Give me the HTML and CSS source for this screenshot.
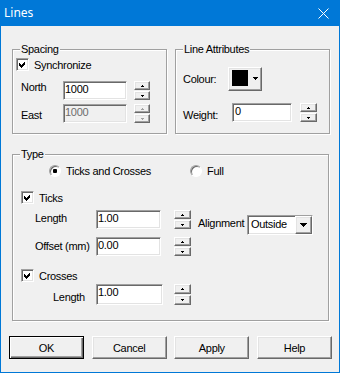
FILE: index.html
```html
<!DOCTYPE html>
<html lang="en">
<head>
  <meta charset="UTF-8">
  <meta name="viewport" content="width=device-width, initial-scale=1.0">
  <title>Lines</title>
  <link rel="stylesheet" href="styles.css">
</head>
<body>
  <div class="window">
    <header class="titlebar">
      <span class="title">Lines</span>
      <svg class="close" width="11" height="11" viewBox="0 0 11 11"><path d="M0.5 0.5L10.5 10.5M10.5 0.5L0.5 10.5" stroke="#fff" stroke-width="1"/></svg>
    </header>

    <main class="client">
      <div class="top-row">
        <section class="group spacing">
          <span class="group-label">Spacing</span>
          <div class="check sync">
            <span class="box sunken"><svg width="13" height="13" viewBox="0 0 13 13"><polygon points="3,5 5,7 9,3 9,6 5,10 3,8" shape-rendering="crispEdges"/></svg></span>
            <span>Synchronize</span>
          </div>
          <div class="spacing-grid">
            <span class="lbl">North</span>
            <div class="edit sunken">1000</div>
            <div class="spin">
              <span class="spin-btn raised"><svg width="3" height="2"><path d="M1 0h1v1h1v1H0V1h1z"/></svg></span>
              <span class="spin-btn raised"><svg width="3" height="2"><path d="M0 0h3v1H2v1H1V1H0z"/></svg></span>
            </div>
            <span class="lbl east">East</span>
            <div class="edit sunken disabled">1000</div>
            <div class="spin disabled">
              <span class="spin-btn raised"><svg width="3" height="2"><path d="M1 0h1v1h1v1H0V1h1z"/></svg></span>
              <span class="spin-btn raised"><svg width="3" height="2"><path d="M0 0h3v1H2v1H1V1H0z"/></svg></span>
            </div>
          </div>
        </section>

        <section class="group attrs">
          <span class="group-label">Line Attributes</span>
          <div class="colour-row">
            <span class="lbl">Colour:</span>
            <div class="colour-btn raised">
              <span class="swatch"></span>
              <svg width="5" height="3"><path d="M0 0h5v1H4v1H3v1H2V2H1V1H0z"/></svg>
            </div>
          </div>
          <div class="weight-row">
            <span class="lbl">Weight:</span>
            <div class="edit sunken weight">0</div>
            <div class="spin">
              <span class="spin-btn raised"><svg width="3" height="2"><path d="M1 0h1v1h1v1H0V1h1z"/></svg></span>
              <span class="spin-btn raised"><svg width="3" height="2"><path d="M0 0h3v1H2v1H1V1H0z"/></svg></span>
            </div>
          </div>
        </section>
      </div>

      <section class="group type">
        <span class="group-label">Type</span>
        <div class="radio-row">
          <div class="radio-item first"><span class="radio checked"></span><span>Ticks and Crosses</span></div>
          <div class="radio-item"><span class="radio"></span><span>Full</span></div>
        </div>

        <div class="check ticks">
          <span class="box sunken"><svg width="13" height="13" viewBox="0 0 13 13"><polygon points="3,5 5,7 9,3 9,6 5,10 3,8" shape-rendering="crispEdges"/></svg></span>
          <span>Ticks</span>
        </div>
        <div class="ticks-grid">
          <span class="lbl len">Length</span>
          <div class="edit sunken">1.00</div>
          <div class="spin">
            <span class="spin-btn raised"><svg width="3" height="2"><path d="M1 0h1v1h1v1H0V1h1z"/></svg></span>
            <span class="spin-btn raised"><svg width="3" height="2"><path d="M0 0h3v1H2v1H1V1H0z"/></svg></span>
          </div>
          <span class="lbl align-lbl">Alignment</span>
          <div class="combo sunken">
            <span class="combo-text">Outside</span>
            <span class="combo-btn raised"><svg width="7" height="4"><path d="M0 0h7v1H6v1H5v1H4v1H3V3H2V2H1V1H0z"/></svg></span>
          </div>
          <span class="lbl off">Offset (mm)</span>
          <div class="edit sunken">0.00</div>
          <div class="spin">
            <span class="spin-btn raised"><svg width="3" height="2"><path d="M1 0h1v1h1v1H0V1h1z"/></svg></span>
            <span class="spin-btn raised"><svg width="3" height="2"><path d="M0 0h3v1H2v1H1V1H0z"/></svg></span>
          </div>
        </div>

        <div class="check crosses">
          <span class="box sunken"><svg width="13" height="13" viewBox="0 0 13 13"><polygon points="3,5 5,7 9,3 9,6 5,10 3,8" shape-rendering="crispEdges"/></svg></span>
          <span>Crosses</span>
        </div>
        <div class="crosses-grid">
          <span class="lbl">Length</span>
          <div class="edit sunken">1.00</div>
          <div class="spin">
            <span class="spin-btn raised"><svg width="3" height="2"><path d="M1 0h1v1h1v1H0V1h1z"/></svg></span>
            <span class="spin-btn raised"><svg width="3" height="2"><path d="M0 0h3v1H2v1H1V1H0z"/></svg></span>
          </div>
        </div>
      </section>

      <div class="buttons">
        <div class="btn raised default">OK</div>
        <div class="btn raised">Cancel</div>
        <div class="btn raised">Apply</div>
        <div class="btn raised">Help</div>
      </div>
    </main>
  </div>
</body>
</html>
```

FILE: styles.css
```css
body {
  margin: 0;
  padding: 0;
  background-color: #f0f0f0;
}

.window {
  width: 340px;
  height: 373px;
  box-sizing: border-box;
  border: 1px solid #0078d7;
  border-top: 0;
  background-color: #f0f0f0;
  font-family: "Liberation Sans", Arial, sans-serif;
  font-size: 11px;
  letter-spacing: -0.3px;
  color: #000;
}

.titlebar {
  height: 26px;
  margin: 0 -1px;
  padding: 0 11px 0 4px;
  background-color: #0078d7;
  color: #fff;
  display: flex;
  justify-content: space-between;
  align-items: center;
}

.title {
  font-family: "Noto Sans", sans-serif;
  font-size: 12px;
  letter-spacing: 0;
  margin-top: -2px;
}

.client {
  padding: 23px 0 0 11px;
}

/* 3d borders */
.raised {
  box-sizing: border-box;
  background-color: #f0f0f0;
  border: 1px solid;
  border-color: #fff #696969 #696969 #fff;
  box-shadow: inset -1px -1px 0 #a0a0a0, inset 1px 1px 0 #e3e3e3;
}

.sunken {
  box-sizing: border-box;
  background-color: #fff;
  border: 1px solid;
  border-color: #a0a0a0 #fff #fff #a0a0a0;
  box-shadow: inset 1px 1px 0 #696969, inset -1px -1px 0 #e3e3e3;
}

.lbl {
  line-height: 12px;
  white-space: nowrap;
}

/* group boxes */
.top-row {
  display: flex;
  gap: 8px;
}

.group {
  position: relative;
  box-sizing: border-box;
  border: 1px solid #a0a0a0;
  box-shadow: inset 1px 1px 0 #fff, 1px 1px 0 #fff;
}

.group-label {
  position: absolute;
  top: -7px;
  left: 7px;
  padding: 0 1px;
  line-height: 13px;
  background-color: #f0f0f0;
}

.spacing,
.attrs {
  width: 155px;
  height: 85px;
}

.type {
  width: 317px;
  height: 167px;
  margin-top: 20px;
}

/* check boxes */
.check {
  display: flex;
  align-items: center;
  gap: 5px;
  height: 13px;
  line-height: 12px;
}

.box {
  display: block;
  width: 13px;
  height: 13px;
}

.box svg {
  display: block;
  margin: -1px;
}

.sync {
  margin: 8px 0 0 3px;
}

.ticks {
  margin: 14px 0 0 8px;
}

.crosses {
  margin: 13px 0 0 8px;
}

/* edits and spinners */
.edit {
  height: 19px;
  padding: 1px 1px 0;
  line-height: 13px;
  white-space: nowrap;
}

.edit.disabled {
  background-color: #f0f0f0;
  color: #6d6d6d;
}

.spin {
  display: flex;
  flex-direction: column;
  justify-content: space-between;
  width: 16px;
  height: 19px;
}

.spin-btn {
  height: 9px;
  display: flex;
  align-items: center;
  justify-content: center;
}

.spin-btn svg {
  display: block;
  fill: #000;
}

.spin.disabled svg {
  fill: #a0a0a0;
}

/* spacing */
.spacing-grid {
  display: grid;
  grid-template-columns: 43px 64px 16px;
  grid-auto-rows: 19px;
  column-gap: 7px;
  row-gap: 4px;
  margin-top: 10px;
}

.spacing-grid .lbl {
  padding-left: 8px;
}

.spacing-grid .east {
  margin-top: 5px;
}

/* line attributes */
.colour-row {
  display: flex;
  align-items: center;
  margin-top: 17px;
}

.colour-row .lbl,
.weight-row .lbl {
  box-sizing: border-box;
  width: 52px;
  padding-left: 7px;
}

.weight-row .lbl {
  width: 56px;
  margin-top: 6px;
}

.colour-btn {
  width: 34px;
  height: 24px;
  padding: 2px 0 0 3px;
  display: flex;
  align-items: flex-start;
}

.swatch {
  width: 16px;
  height: 16px;
  background-color: #000;
}

.colour-btn svg {
  display: block;
  margin: 7px 0 0 5px;
}

.weight-row {
  display: flex;
  align-items: flex-start;
  margin-top: 12px;
}

.weight {
  width: 60px;
  padding-left: 2px;
}

.weight-row .spin {
  width: 17px;
  margin-left: 8px;
}

/* type */
.radio-row {
  display: flex;
  margin: 10px 0 0 36px;
  height: 12px;
}

.radio-item {
  display: flex;
  align-items: center;
  gap: 5px;
  line-height: 12px;
}

.radio-item.first {
  width: 141px;
}

.radio {
  position: relative;
  box-sizing: border-box;
  width: 12px;
  height: 12px;
  border-radius: 50%;
  border: 1px solid;
  border-color: #a0a0a0 #fff #fff #a0a0a0;
  box-shadow: inset 1px 1px 0 #696969;
  background-color: #fff;
}

.radio.checked::after {
  content: "";
  position: absolute;
  left: 3px;
  top: 3px;
  width: 4px;
  height: 4px;
  border-radius: 1px;
  background-color: #000;
}

.ticks-grid {
  display: grid;
  grid-template-columns: 83px 65px 30px 56px 66px;
  grid-template-rows: 19px 19px;
  row-gap: 8px;
  margin-top: 6px;
}

.ticks-grid .len,
.ticks-grid .off {
  padding-left: 22px;
  margin-top: 2px;
}

.ticks-grid .off {
  margin-top: 3px;
}

.ticks-grid .spin,
.crosses-grid .spin {
  justify-self: end;
  width: 17px;
}

.align-lbl {
  grid-column: 4;
  grid-row: 1 / span 2;
  padding-left: 7px;
  margin-top: 7px;
}

.combo {
  grid-column: 5;
  grid-row: 1 / span 2;
  align-self: start;
  height: 20px;
  margin-top: 5px;
  display: flex;
}

.combo-text {
  flex: 1;
  padding: 2px 0 0 3px;
  line-height: 13px;
}

.combo-btn {
  width: 17px;
  height: 18px;
  display: flex;
  align-items: center;
  justify-content: center;
}

.combo-btn svg {
  display: block;
}

.crosses-grid {
  display: grid;
  grid-template-columns: 83px 67px 28px;
  grid-template-rows: 21px;
  margin-top: 2px;
}

.crosses-grid .lbl {
  padding-left: 40px;
  margin-top: 7px;
}

.crosses-grid .edit,
.crosses-grid .spin {
  height: 21px;
}

.crosses-grid .spin-btn {
  height: 10px;
}

/* push buttons */
.buttons {
  display: flex;
  justify-content: space-between;
  width: 323px;
  margin: 15px 0 0 -3px;
}

.btn {
  width: 75px;
  height: 23px;
  display: flex;
  align-items: center;
  justify-content: center;
}

.btn.default {
  border-color: #000;
  box-shadow: inset 1px 1px 0 #fff, inset -1px -1px 0 #696969, inset -2px -2px 0 #a0a0a0;
}
```
